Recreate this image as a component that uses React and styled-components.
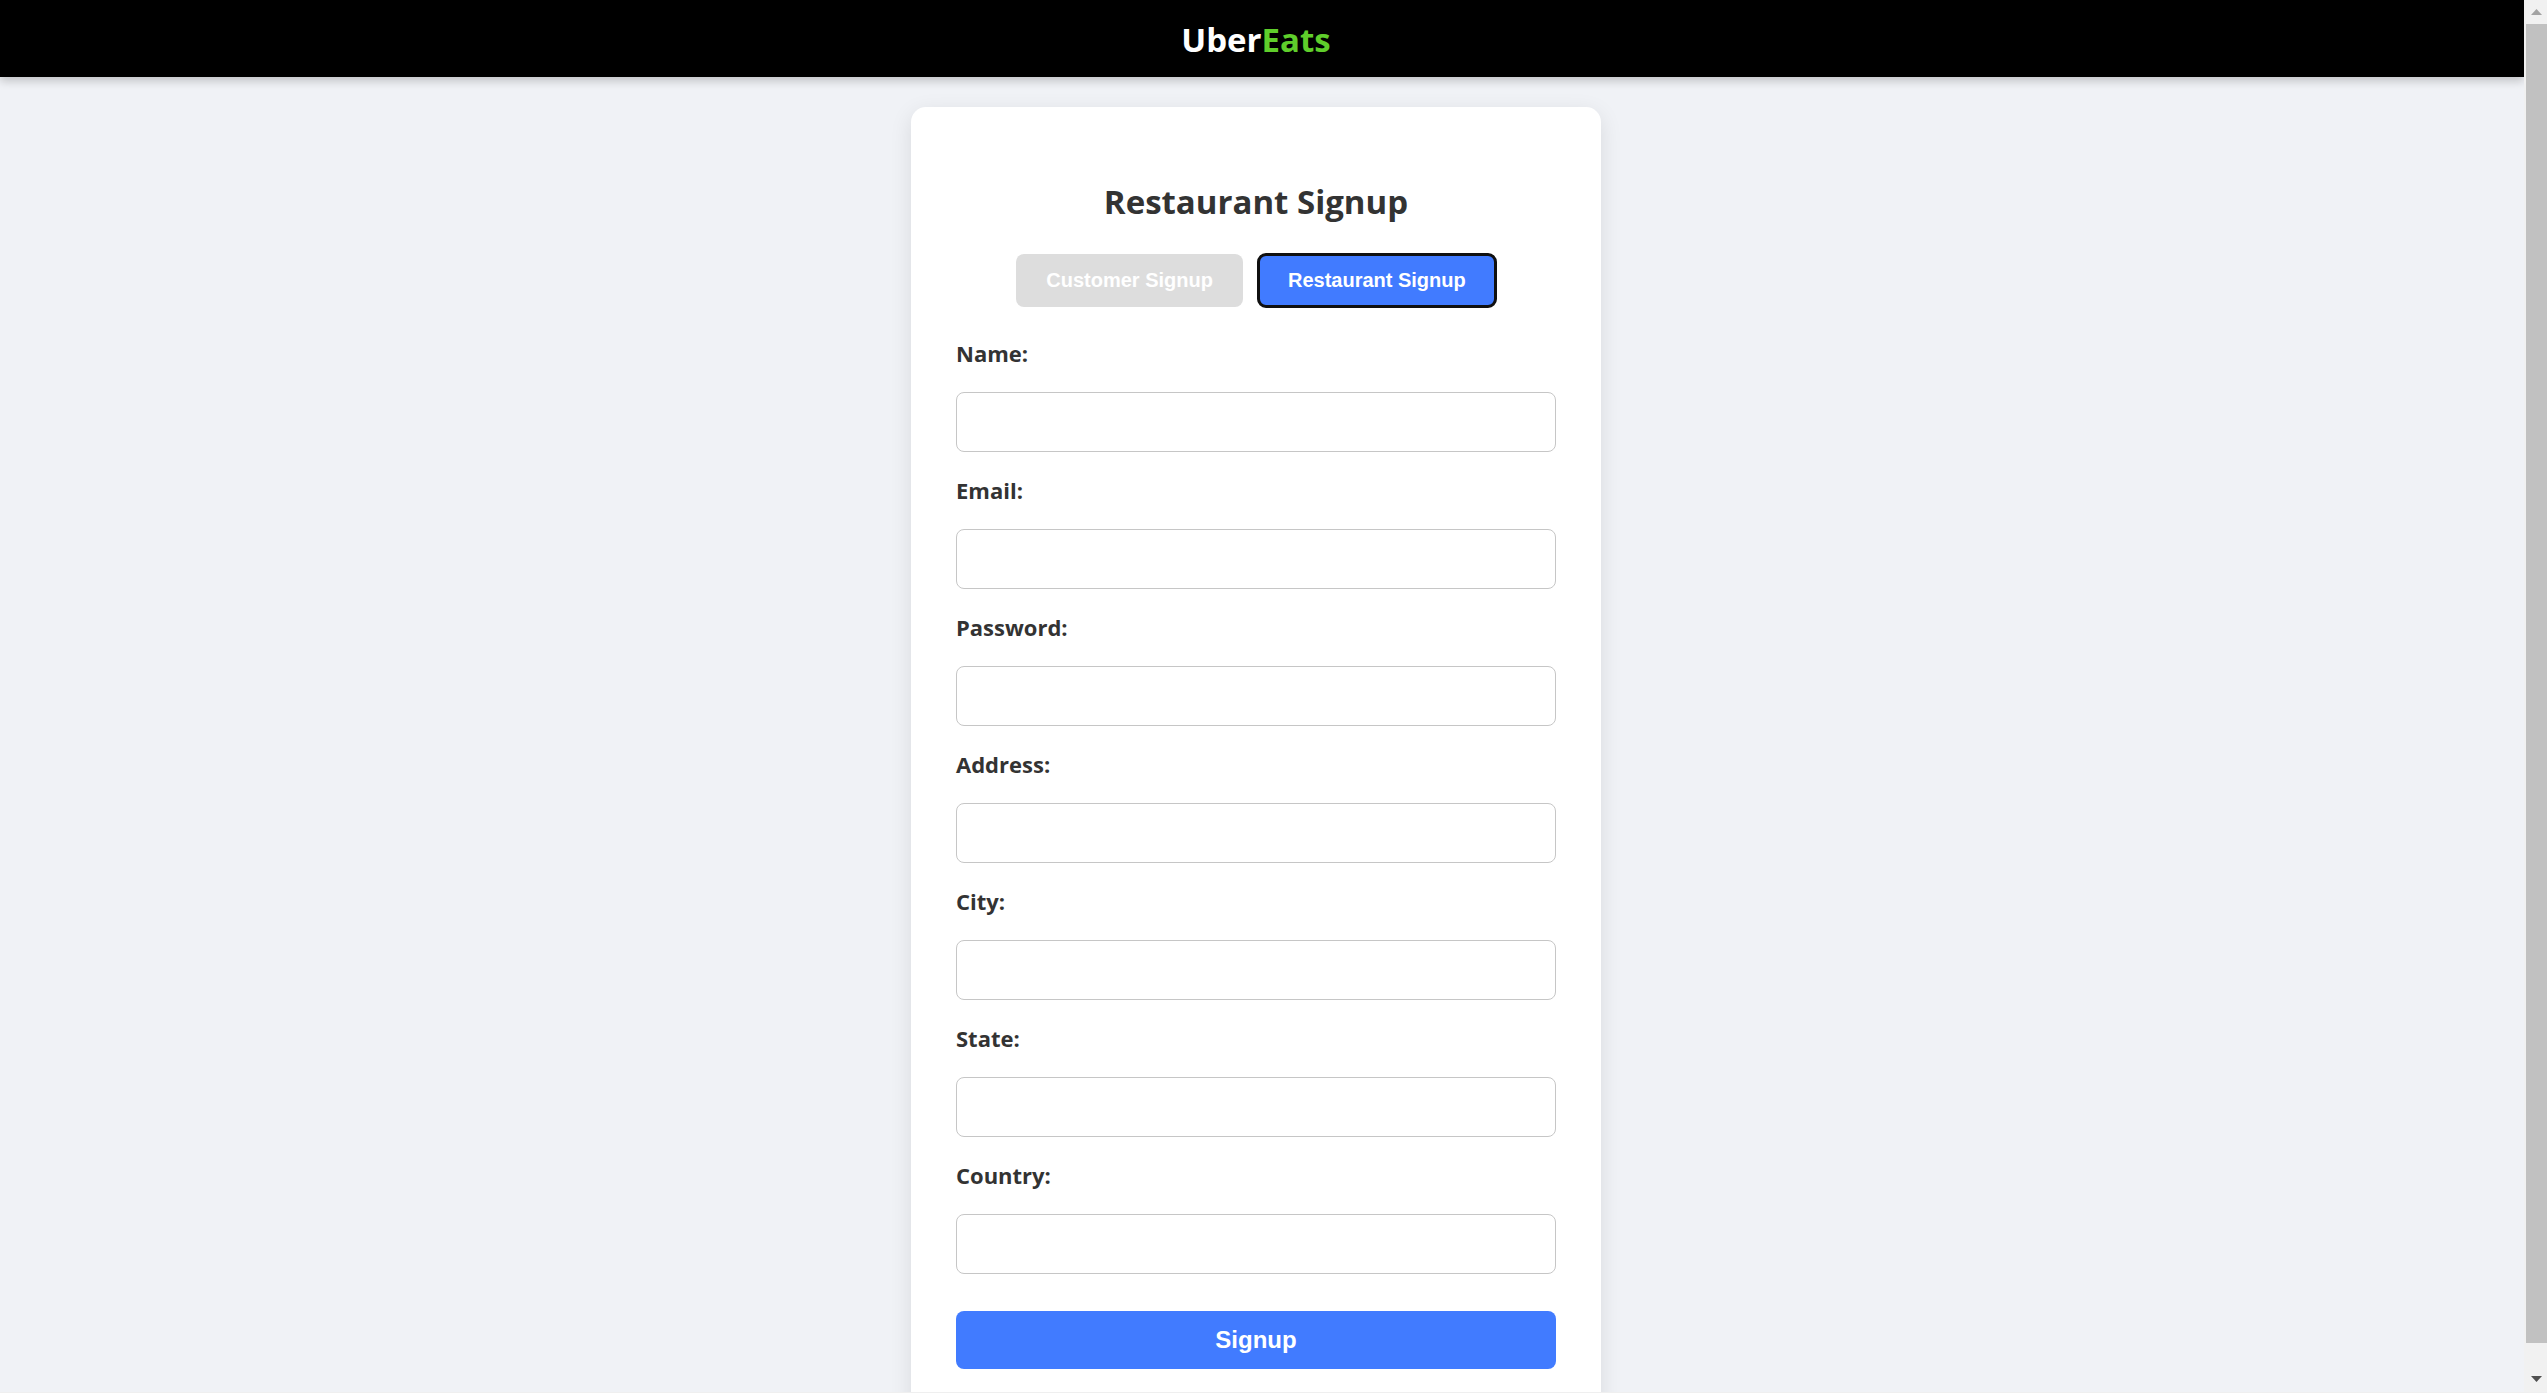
import React from "react";
import styled, { createGlobalStyle } from "styled-components";

const GlobalStyle = createGlobalStyle`
  *, *::before, *::after { box-sizing: border-box; }
  body {
    margin: 0;
    background: #f0f2f6;
    color: #333;
    font-family: "Open Sans", "Noto Sans", sans-serif;
  }
`;

const Window = styled.div`
  display: flex;
  height: 100vh;
  overflow: hidden;
  border-bottom: 1px solid #efefef;
`;

const Page = styled.div`
  flex: 1;
  min-width: 0;
`;

const Header = styled.header`
  padding: 16px 27px 14px 15px;
  background: #000;
  box-shadow: 0 4px 9px rgba(0, 0, 0, 0.2);
  text-align: center;
`;

const Logo = styled.a`
  display: block;
  color: #fff;
  font-size: 33px;
  line-height: 47px;
  font-weight: 700;
  text-decoration: none;
`;

const LogoAccent = styled.span`
  color: #5fce2b;
`;

const Content = styled.main`
  padding: 30px 12px 30px 0;
`;

const Card = styled.section`
  width: 100%;
  max-width: 690px;
  margin: 0 auto;
  padding: 71px 45px 45px;
  background: #fff;
  border-radius: 15px;
  box-shadow: 0 6px 22px rgba(0, 0, 0, 0.1);
`;

const Title = styled.h2`
  margin: 0 0 28px;
  font-size: 33px;
  line-height: 48px;
  font-weight: 700;
  text-align: center;
`;

const Tabs = styled.div`
  display: flex;
  justify-content: center;
  gap: 15px;
  margin-bottom: 30px;
`;

const Button = styled.button`
  border: 0;
  border-radius: 8px;
  color: #fff;
  background: #417bff;
  font-family: "Liberation Sans", Arial, sans-serif;
  font-weight: 700;
  cursor: pointer;
`;

const TabButton = styled(Button)`
  padding: 15px 30px;
  font-size: 20px;
  line-height: 23px;
  background: ${(p) => (p.$active ? "#417bff" : "#ddd")};
  outline: ${(p) => (p.$active ? "3px solid #101010" : "none")};
  outline-offset: -2px;
`;

const Form = styled.form`
  display: flex;
  flex-direction: column;
  gap: 22px;
`;

const Field = styled.div`
  display: flex;
  flex-direction: column;
  gap: 23px;
`;

const Label = styled.label`
  font-size: 22px;
  line-height: 32px;
  font-weight: 700;
`;

const Input = styled.input`
  width: 100%;
  height: 60px;
  padding: 15px;
  border: 1px solid #c6c6c6;
  border-radius: 8px;
  background: #fff;
  font-family: "Liberation Sans", Arial, sans-serif;
  font-size: 24px;
`;

const SubmitButton = styled(Button)`
  width: 100%;
  margin-top: 15px;
  padding: 15px;
  font-size: 24px;
  line-height: 28px;
`;

const Scrollbar = styled.div`
  display: flex;
  flex-direction: column;
  width: 23px;
  padding-left: 2px;
  background: #f1f1f1;
`;

const ScrollArrow = styled.svg`
  display: block;
  flex: none;
  width: 21px;
  height: 24px;
  fill: ${(p) => p.$color};
`;

const ScrollTrack = styled.div`
  display: flex;
  flex: 1;
  padding-bottom: 25px;
`;

const ScrollThumb = styled.div`
  flex: 1;
  background: #c1c1c1;
`;

const fields = [
  { id: "name", label: "Name:", type: "text" },
  { id: "email", label: "Email:", type: "email" },
  { id: "password", label: "Password:", type: "password" },
  { id: "address", label: "Address:", type: "text" },
  { id: "city", label: "City:", type: "text" },
  { id: "state", label: "State:", type: "text" },
  { id: "country", label: "Country:", type: "text" },
];

export default function App() {
  return (
    <Window>
      <GlobalStyle />
      <Page>
        <Header>
          <Logo href="#">
            Uber<LogoAccent>Eats</LogoAccent>
          </Logo>
        </Header>
        <Content>
          <Card>
            <Title>Restaurant Signup</Title>
            <Tabs>
              <TabButton type="button">Customer Signup</TabButton>
              <TabButton type="button" $active>
                Restaurant Signup
              </TabButton>
            </Tabs>
            <Form onSubmit={(e) => e.preventDefault()}>
              {fields.map((f) => (
                <Field key={f.id}>
                  <Label htmlFor={f.id}>{f.label}</Label>
                  <Input id={f.id} name={f.id} type={f.type} />
                </Field>
              ))}
              <SubmitButton type="submit">Signup</SubmitButton>
            </Form>
          </Card>
        </Content>
      </Page>
      <Scrollbar aria-hidden="true">
        <ScrollArrow viewBox="0 0 21 24" $color="#a3a3a3">
          <path d="M5 15 L10.5 9 L16 15 Z" />
        </ScrollArrow>
        <ScrollTrack>
          <ScrollThumb />
        </ScrollTrack>
        <ScrollArrow viewBox="0 0 21 24" $color="#505050">
          <path d="M5 8 L10.5 14 L16 8 Z" />
        </ScrollArrow>
      </Scrollbar>
    </Window>
  );
}
